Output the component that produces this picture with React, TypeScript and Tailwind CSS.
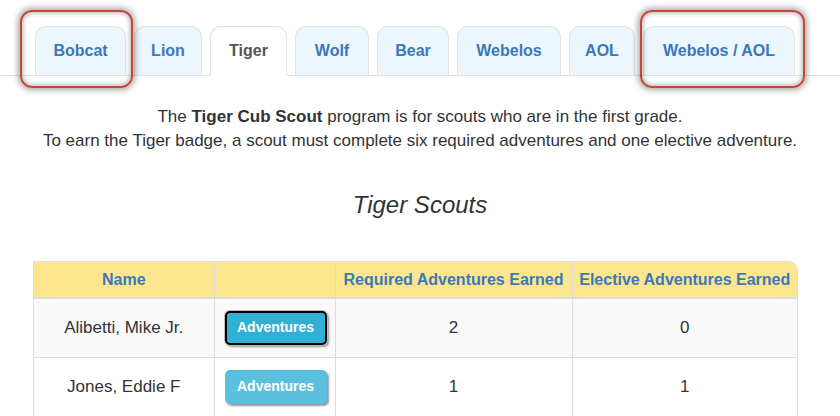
import React from 'react'

const TABS: Array<{ label: string; width: string; active?: boolean }> = [
  { label: 'Bobcat', width: 'w-[91px]' },
  { label: 'Lion', width: 'w-[68px]' },
  { label: 'Tiger', width: 'w-[77px]', active: true },
  { label: 'Wolf', width: 'w-[74px]' },
  { label: 'Bear', width: 'w-[72px]' },
  { label: 'Webelos', width: 'w-[104px]' },
  { label: 'AOL', width: 'w-[66px]' },
  { label: 'Webelos / AOL', width: 'w-[152px]' },
]

const SCOUTS = [
  { name: 'Alibetti, Mike Jr.', required: 2, elective: 0, focused: true },
  { name: 'Jones, Eddie F', required: 1, elective: 1, focused: false },
]

export default function App() {
  return (
    <div className="relative h-[416px] w-[840px] overflow-hidden bg-white font-['Liberation_Sans',sans-serif] text-[#333]">
      {/* Tab strip */}
      <div className="flex h-[76px] items-end gap-2 border-b border-[#e3e3e3] pl-[35px]">
        {TABS.map((t) => (
          <div
            key={t.label}
            className={
              t.active
                ? `${t.width} -mb-px flex h-[50px] items-center justify-center rounded-t-[11px] border border-b-white border-[#e3e3e3] bg-white text-[16px] font-bold text-[#555]`
                : `${t.width} flex h-[49px] items-center justify-center rounded-t-[11px] border border-b-0 border-[#e3e3e3] bg-[#ecf6fd] text-[16px] font-bold text-[#3b78b9]`
            }
          >
            {t.label}
          </div>
        ))}
      </div>

      {/* Highlight callouts */}
      <div className="pointer-events-none absolute top-[10px] left-[20px] h-[78px] w-[113px] rounded-[12px] border-2 border-[#c24a33] shadow-[0_0_6px_2px_rgba(0,0,0,0.35),inset_0_0_5px_1px_rgba(0,0,0,0.3)]" />
      <div className="pointer-events-none absolute top-[10px] left-[640px] h-[78px] w-[165px] rounded-[12px] border-2 border-[#c24a33] shadow-[0_0_6px_2px_rgba(0,0,0,0.35),inset_0_0_5px_1px_rgba(0,0,0,0.3)]" />

      <div className="mt-[29px] text-center text-[17px] leading-6">
        <p>
          The <b>Tiger Cub Scout</b> program is for scouts who are in the first grade.
        </p>
        <p>
          To earn the Tiger badge, a scout must complete six required adventures and one elective adventure.
        </p>
      </div>

      <h2 className="mt-[38px] text-center text-[24px] leading-7 italic">Tiger Scouts</h2>

      <div className="mt-[42px] ml-[33px] w-[765px] overflow-hidden rounded-tr-[9px] border border-[#ddd]">
        <table className="w-full border-collapse text-center text-[17px]">
          <thead>
            <tr className="h-[36px] border-b-2 border-[#ddd] bg-[#fde68d] text-[16px] font-bold text-[#3b78b9]">
              <th className="w-[180px] border-r border-[#ddd] font-bold">Name</th>
              <th className="w-[121px] border-r border-[#ddd]" />
              <th className="w-[237px] border-r border-[#ddd] font-bold">Required Adventures Earned</th>
              <th className="font-bold">Elective Adventures Earned</th>
            </tr>
          </thead>
          <tbody>
            {SCOUTS.map((s, i) => (
              <tr key={s.name} className={`h-[59px] border-b border-[#ddd] ${i % 2 === 0 ? 'bg-[#f9f9f9]' : 'bg-white'}`}>
                <td className="border-r border-[#ddd]">{s.name}</td>
                <td className="border-r border-[#ddd] pl-[10px] text-left">
                  <button
                    className={
                      s.focused
                        ? 'h-[34px] w-[102px] rounded-[5px] border-2 border-black bg-[#31b0d5] text-[14px] font-bold text-white shadow-[0_0_0_1px_#bbb,2px_2px_2px_rgba(0,0,0,0.4)]'
                        : 'h-[34px] w-[102px] rounded-[5px] bg-[#5bc0de] text-[14px] font-bold text-white shadow-[2px_2px_2px_rgba(0,0,0,0.4)]'
                    }
                  >
                    Adventures
                  </button>
                </td>
                <td className="border-r border-[#ddd]">{s.required}</td>
                <td>{s.elective}</td>
              </tr>
            ))}
          </tbody>
        </table>
      </div>
    </div>
  )
}
